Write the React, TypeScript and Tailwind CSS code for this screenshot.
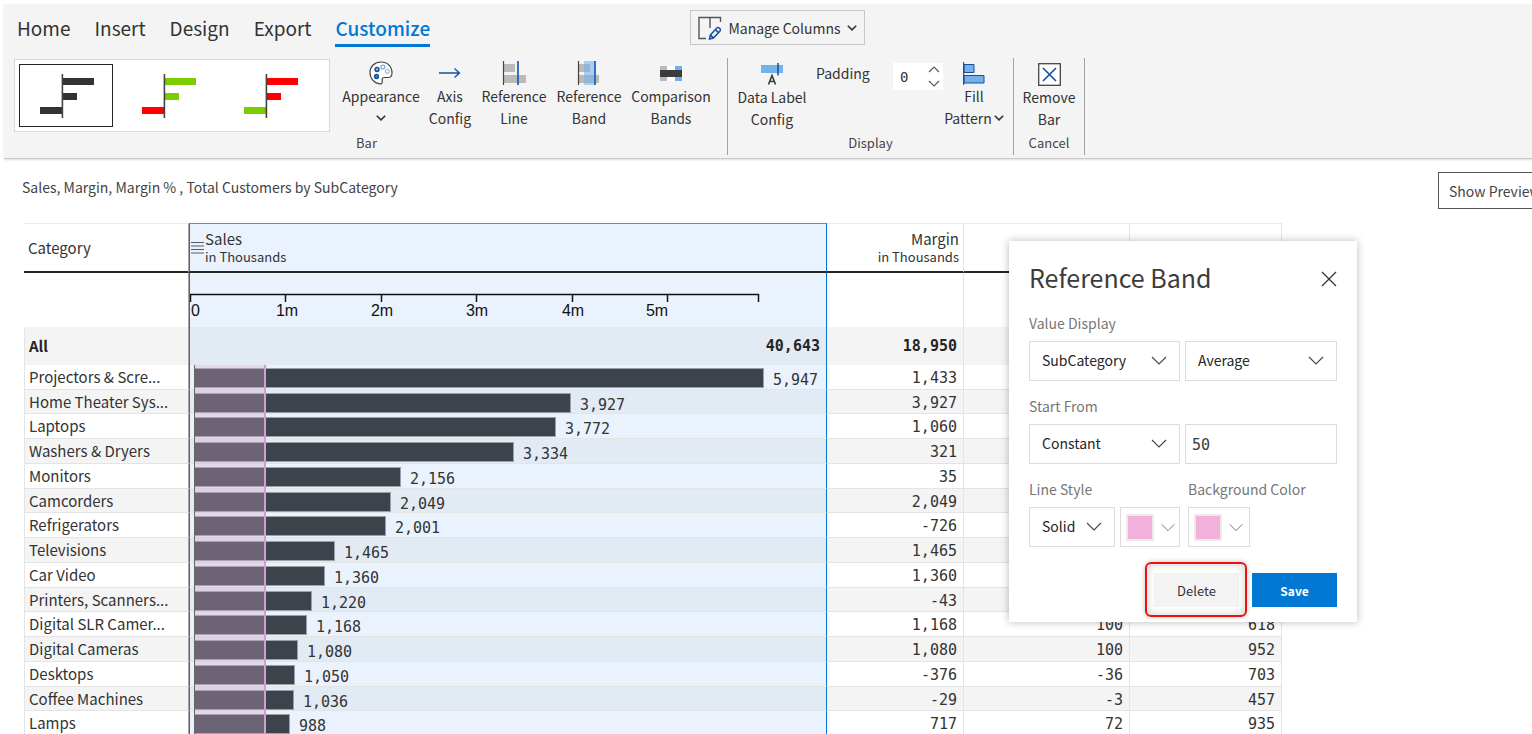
import type { ReactNode } from 'react';

type Row = { name: string; sales: number; margin: string; pct?: string; customers?: string };

const rows: Row[] = [
  { name: 'Projectors & Scre...', sales: 5947, margin: '1,433' },
  { name: 'Home Theater Sys...', sales: 3927, margin: '3,927' },
  { name: 'Laptops', sales: 3772, margin: '1,060' },
  { name: 'Washers & Dryers', sales: 3334, margin: '321' },
  { name: 'Monitors', sales: 2156, margin: '35' },
  { name: 'Camcorders', sales: 2049, margin: '2,049' },
  { name: 'Refrigerators', sales: 2001, margin: '-726' },
  { name: 'Televisions', sales: 1465, margin: '1,465' },
  { name: 'Car Video', sales: 1360, margin: '1,360' },
  { name: 'Printers, Scanners...', sales: 1220, margin: '-43' },
  { name: 'Digital SLR Camer...', sales: 1168, margin: '1,168', pct: '100', customers: '618' },
  { name: 'Digital Cameras', sales: 1080, margin: '1,080', pct: '100', customers: '952' },
  { name: 'Desktops', sales: 1050, margin: '-376', pct: '-36', customers: '703' },
  { name: 'Coffee Machines', sales: 1036, margin: '-29', pct: '-3', customers: '457' },
  { name: 'Lamps', sales: 988, margin: '717', pct: '72', customers: '935' },
];

const MAX_SALES = 5947;
const MAX_BAR = 569;

function Chevron({ className = '' }: { className?: string }) {
  return (
    <svg aria-hidden="true" viewBox="0 0 16 9" className={`pointer-events-none h-[9px] w-4 ${className}`}>
      <path d="M1 1l7 7 7-7" fill="none" stroke="currentColor" strokeWidth="1.1" />
    </svg>
  );
}

function SmallChevron() {
  return (
    <svg aria-hidden="true" viewBox="0 0 10 6" className="h-[6px] w-[10px] shrink-0">
      <path d="M.8.8L5 4.9 9.2.8" fill="none" stroke="#333" strokeWidth="1.6" />
    </svg>
  );
}

function Preset({ top, bottom, active }: { top: string; bottom: string; active?: boolean }) {
  return (
    <button
      aria-label="Bar style"
      className={`flex h-[63px] w-[94px] items-center justify-center border ${active ? 'border-[#252525]' : 'border-transparent'}`}
    >
      <svg viewBox="0 0 54 44" className="ml-px h-11 w-[54px]">
        <rect x="23" y="4" width="31" height="7" fill={top} />
        <rect x="23" y="19" width="14" height="7" fill={top} />
        <rect x="0" y="33" width="22" height="7" fill={bottom} />
        <rect x="21.6" y="0" width="1.6" height="44" fill="#444" />
      </svg>
    </button>
  );
}

function Tool({ icon, children, className = '' }: { icon: ReactNode; children: ReactNode; className?: string }) {
  return (
    <button className={`flex shrink-0 flex-col items-center whitespace-nowrap text-center text-sm leading-[22px] ${className}`}>
      <span className="flex h-6 items-center">{icon}</span>
      <span className="flex flex-col items-center">{children}</span>
    </button>
  );
}

function Group({ label, children, className = '' }: { label: string; children: ReactNode; className?: string }) {
  return (
    <section className={`flex h-[97px] flex-col border-r border-[#a3a3a3] ${className}`}>
      <div className="flex flex-1 items-start">{children}</div>
      <h2 className="pb-0.5 text-center text-[13px] leading-5 text-[#444]">{label}</h2>
    </section>
  );
}

const refAxis = <path d="M1.5 0v24" stroke="#444" strokeWidth="1.2" />;

function Ribbon() {
  return (
    <header className="ml-1 h-[155px] overflow-hidden border-b border-[#c8c8c8] bg-[#f4f4f4] text-[#333] shadow-[0_1px_2px_#ddd]">
      <div className="flex h-[54px] items-start pl-3 pt-1.5">
        <nav className="flex w-[408px] shrink-0 gap-6 pl-px pt-0.5 text-[19px] leading-8">
          <a href="#home">Home</a>
          <a href="#insert">Insert</a>
          <a href="#design">Design</a>
          <a href="#export">Export</a>
          <a href="#customize" aria-current="page" className="h-[35px] border-b-[3px] border-[#0078d4] font-medium text-[#0078d4]">
            Customize
          </a>
        </nav>
        <button className="ml-[266px] flex h-[35px] w-[175px] items-center justify-center gap-1.5 border border-[#c8c8c8] text-sm">
          <svg aria-hidden="true" viewBox="0 0 24 24" className="h-6 w-6">
            <path d="M22.500 6V1.500H1V22.500H8M12 1.500V12" fill="none" stroke="#555" strokeWidth="1.4" />
            <path d="M11.500 23l.8-4 6.500-6.900c1.500-1.600 4.600 1 3.200 2.800L15.400 22l-3.900 1zM17.500 13.700l2.700 2.700M12.500 19l2.600 2.600" fill="none" stroke="#1450a0" strokeWidth="1.5" />
          </svg>
          <span>Manage Columns</span>
          <SmallChevron />
        </button>
      </div>

      <div className="flex pl-2.5">
        <Group label="Bar" className="w-[714px] pr-2">
          <div className="mr-3 mt-px flex h-[73px] w-[316px] gap-2 border border-[#dadada] bg-white p-1">
            <Preset top="#333" bottom="#333" active />
            <Preset top="#7ccc00" bottom="#ff0000" />
            <Preset top="#ff0000" bottom="#7ccc00" />
          </div>
          <div className="flex gap-2 pt-[3px]">
            <Tool
              className="w-[78px]"
              icon={
                <svg viewBox="0 0 24 24" className="h-6 w-6">
                  <path d="M12 1C5.500 1 1 5.500 1 11.500 1 17.600 5.600 22.500 11 22.800c1.500.1 2.200-.5 2.200-1.800v-2.500c0-1.400.8-2 2-2H19c2.500 0 4-1.800 4-4.500C23 5.500 18.500 1 12 1z" fill="#fff" stroke="#444" strokeWidth="1.2" />
                  <circle cx="8" cy="8.500" r="1.900" fill="#8fc3f0" stroke="#1450a0" strokeWidth="1.500" />
                  <circle cx="7.500" cy="15.500" r="1.900" fill="#4a86cc" stroke="#1450a0" strokeWidth="1.500" />
                  <circle cx="13.800" cy="6" r="1.900" fill="#fff" stroke="#78b0e6" strokeWidth="1.300" />
                  <circle cx="18.300" cy="10.300" r="1.900" fill="#fff" stroke="#bbb" strokeWidth="1.300" />
                </svg>
              }
            >
              <span>Appearance</span>
              <span className="flex h-[22px] items-center"><SmallChevron /></span>
            </Tool>
            <Tool
              className="w-11"
              icon={
                <svg viewBox="0 0 22 12" className="h-3 w-[22px]">
                  <path d="M0 6h20M15.500 1.500L20.500 6l-5 4.500" fill="none" stroke="#1450a0" strokeWidth="1.300" />
                </svg>
              }
            >
              <span>Axis</span>
              <span>Config</span>
            </Tool>
            <Tool
              className="w-[68px]"
              icon={
                <svg viewBox="0 0 24 24" className="h-6 w-6">
                  <rect x="2" y="3" width="11" height="8" fill="#bbbab6" />
                  <rect x="2" y="14" width="22" height="8" fill="#bbbab6" />
                  {refAxis}
                  <path d="M16 0v24" stroke="#2464b4" strokeWidth="1.800" />
                </svg>
              }
            >
              <span>Reference</span>
              <span>Line</span>
            </Tool>
            <Tool
              className="w-[66px]"
              icon={
                <svg viewBox="0 0 24 24" className="h-6 w-6">
                  <rect x="2" y="3" width="11" height="8" fill="#bbbab6" />
                  <rect x="2" y="14" width="20" height="8" fill="#bbbab6" />
                  {refAxis}
                  <rect x="7" y="0" width="11" height="24" fill="#78b4eb" opacity=".6" />
                  <path d="M18 0v24" stroke="#2464b4" strokeWidth="1.800" />
                </svg>
              }
            >
              <span>Reference</span>
              <span>Band</span>
            </Tool>
            <Tool
              className="w-[82px]"
              icon={
                <svg viewBox="0 0 22 15" className="h-[15px] w-[22px]">
                  <rect width="7" height="15" fill="#bbbab6" />
                  <rect x="7" width="8" height="15" fill="#fff" />
                  <rect x="15" width="7" height="15" fill="#6fb0ea" />
                  <rect y="4" width="22" height="7" fill="#3c3c3c" />
                </svg>
              }
            >
              <span>Comparison</span>
              <span>Bands</span>
            </Tool>
          </div>
        </Group>

        <Group label="Display" className="w-[286px] pl-2 pr-2">
          <Tool
            className="w-[72px] pt-1"
            icon={
              <svg viewBox="0 0 22 22" className="h-[22px] w-[22px]">
                <rect y="2" width="22" height="8" fill="#74b2eb" />
                <path d="M17 0v12.500" stroke="#1450a0" strokeWidth="1.500" />
                <path d="M7.500 21.500L11 12.500l3.500 9M8.700 18.500h4.600" fill="none" stroke="#3c3c3c" strokeWidth="1.600" />
              </svg>
            }
          >
            <span>Data Label</span>
            <span>Config</span>
          </Tool>
          <div className="flex shrink-0 pl-2 pt-[5px] text-sm">
            <label htmlFor="padding" className="w-[77px] leading-5">Padding</label>
            <div className="flex h-[27px] w-[50px] items-center bg-white">
              <input id="padding" defaultValue="0" className="w-[35px] bg-transparent pl-[7px] font-['DejaVu_Sans_Mono',monospace] text-sm outline-none" />
              <div className="flex flex-col gap-[7px]">
                <button aria-label="Increase padding">
                  <svg viewBox="0 0 12 7" className="block h-[7px] w-3"><path d="M1 6l5-5 5 5" fill="none" stroke="#555" strokeWidth="1.100" /></svg>
                </button>
                <button aria-label="Decrease padding">
                  <svg viewBox="0 0 12 7" className="block h-[7px] w-3"><path d="M1 1l5 5 5-5" fill="none" stroke="#555" strokeWidth="1.100" /></svg>
                </button>
              </div>
            </div>
          </div>
          <Tool
            className="w-[62px] pt-[3px]"
            icon={
              <svg viewBox="0 0 22 23" className="h-[23px] w-[22px]">
                <path d="M1 2.500h10v8H1zM1 13.500h20v7.500H1z" fill="#74b2eb" stroke="#1450a0" />
                <path d="M.7 0v23" stroke="#333" />
              </svg>
            }
          >
            <span>Fill</span>
            <span className="flex items-center gap-0.5">Pattern <SmallChevron /></span>
          </Tool>
        </Group>

        <Group label="Cancel" className="w-[71px]">
          <Tool
            className="w-full pt-1"
            icon={
              <svg viewBox="0 0 23 23" className="h-[23px] w-[23px]">
                <rect x=".7" y=".7" width="21.600" height="21.600" fill="#fff" stroke="#444" strokeWidth="1.300" />
                <path d="M5 5l13 13M18 5L5 18" stroke="#1450a0" strokeWidth="1.600" />
              </svg>
            }
          >
            <span>Remove</span>
            <span>Bar</span>
          </Tool>
        </Group>
      </div>
    </header>
  );
}

function Axis() {
  const ticks = [1, 96, 192, 287, 383, 478, 569];
  return (
    <svg role="img" aria-label="Sales axis" className="block h-[54px] w-full font-['Liberation_Sans',sans-serif] text-base" fill="#111">
      <path d="M0 21.500H569" stroke="#111" strokeWidth="1.500" />
      {ticks.map((x) => (
        <path key={x} d={`M${x - 0.5} 21v8`} stroke="#111" strokeWidth="1.500" />
      ))}
      <text x="1" y="43">0</text>
      <g textAnchor="middle">
        <text x="97" y="43">1m</text>
        <text x="192" y="43">2m</text>
        <text x="287" y="43">3m</text>
        <text x="383" y="43">4m</text>
        <text x="467" y="43">5m</text>
      </g>
    </svg>
  );
}

const cell = 'border-r border-[#e4e4e4] p-0 pt-0.5 pr-1.5 text-right';
const headCell = 'border-t border-r border-b-2 border-t-[#ececec] border-r-[#e4e4e4] border-b-[#252525] p-0 pr-1 text-right font-normal';
const nameCol = 'border-r border-r-[#a8a8a8] p-0 pl-1 text-left';
const salesCol = 'border-l border-r border-l-[#0078d4] border-r-[#0078d4] p-0';

function SalesTable() {
  return (
    <table className="ml-6 w-[1258px] table-fixed border-separate border-spacing-0 font-['DejaVu_Sans_Mono',monospace] text-[15px] leading-5 text-[#333]">
      <colgroup>
        <col className="w-[165px]" />
        <col className="w-[638px]" />
        <col className="w-[137px]" />
        <col className="w-[166px]" />
        <col className="w-[152px]" />
      </colgroup>
      <thead className="font-['Noto_Sans_CJK_SC',sans-serif]">
        <tr className="h-[50px]">
          <th className={`${nameCol} border-b-2 border-t border-b-[#252525] border-t-[#ececec] font-normal`}>Category</th>
          <th className={`${salesCol} border-b-2 border-t border-b-[#252525] border-t-[#3d98e0] bg-[#eaf3fd] text-left font-normal`}>
            <div className="flex items-center gap-px pl-px">
              <svg aria-hidden="true" viewBox="0 0 13 13" className="h-[13px] w-[13px]">
                <path d="M0 1.500h13M0 5h13M0 8.500h13M0 12h13" stroke="#555e68" strokeWidth="1" />
              </svg>
              <div className="leading-[18px]">
                Sales
                <div className="text-[13px]">in Thousands</div>
              </div>
            </div>
          </th>
          <th className={`${headCell} leading-[18px]`}>
            Margin
            <div className="text-[13px]">in Thousands</div>
          </th>
          <th className={headCell}>Margin %</th>
          <th className={headCell}>Total Customers</th>
        </tr>
      </thead>
      <tbody>
        <tr className="h-[54px]">
          <td className={nameCol} />
          <td className={`${salesCol} bg-[#eaf3fd]`}><Axis /></td>
          <td className={cell} />
          <td className={cell} />
          <td className={cell} />
        </tr>
        <tr className="h-[38px] bg-[#f4f4f4] font-bold text-[#252525]">
          <th className={`${nameCol} border-l border-l-[#e4e4e4] font-['Noto_Sans_CJK_SC',sans-serif]`}>All</th>
          <td className={`${salesCol} bg-[#e2eaf4] pr-1.5 text-right`}>40,643</td>
          <td className="border-r border-[#e4e4e4] p-0 pr-1.5 text-right">18,950</td>
          <td className={cell} />
          <td className={cell} />
        </tr>
        {rows.map((r) => (
          <tr key={r.name} className="group h-[25px] even:bg-[#f4f4f4] [&:nth-child(4n)]:h-6 [&>*]:border-b [&>*]:border-b-[#e4e4e4]">
            <th className={`${nameCol} truncate border-l border-l-[#e4e4e4] font-['Noto_Sans_CJK_SC',sans-serif] font-normal leading-5`}>{r.name}</th>
            <td className={`${salesCol} relative bg-[#eaf3fd] group-even:bg-[#e2eaf4]`}>
              <div className="flex items-center pl-1 pt-0.5">
                <div className="h-5 border border-[#99a0a8] bg-[#3c434b]" style={{ width: Math.round((r.sales * MAX_BAR) / MAX_SALES) + 1 }} />
                <span className="pl-[9px] pt-1 leading-4">{r.sales.toLocaleString('en-US')}</span>
              </div>
              <div className="absolute -bottom-px left-1 top-0 w-[72px] border-l border-r-2 border-l-[#666] border-r-[#d29fca] bg-[rgba(205,165,200,0.33)]" />
            </td>
            <td className={cell}>{r.margin}</td>
            <td className={cell}>{r.pct}</td>
            <td className={cell}>{r.customers}</td>
          </tr>
        ))}
      </tbody>
    </table>
  );
}

function Select({ label, options, className = '' }: { label: string; options: string[]; className?: string }) {
  return (
    <div className={`relative h-10 ${className}`}>
      <select aria-label={label} className="h-full w-full appearance-none border border-[#dcdcdc] bg-white pb-0.5 pl-3 text-sm text-[#252525] outline-none">
        {options.map((o) => (
          <option key={o}>{o}</option>
        ))}
      </select>
      <Chevron className="absolute right-[13px] top-[15px] text-[#444]" />
    </div>
  );
}

function ColorPicker({ label, className = '' }: { label: string; className?: string }) {
  return (
    <button aria-label={label} className={`flex h-10 items-center gap-1.5 border border-[#dcdcdc] bg-white pl-[5px] text-[#777] ${className}`}>
      <span className="h-[27px] w-7 border-2 border-[#ebebeb] bg-[#f1b1da]" />
      <Chevron className="scale-90" />
    </button>
  );
}

const legendStyle = 'py-2 text-sm leading-5 text-[#777]';

function ReferenceBandPanel() {
  return (
    <aside role="dialog" aria-labelledby="band-title" className="absolute left-[1009px] top-[241px] h-[381px] w-[348px] bg-white px-5 shadow-[0_0_8px_rgba(0,0,0,0.28)]">
      <div className="flex items-center justify-between pb-2 pt-5">
        <h1 id="band-title" className="pb-1 text-[25px] leading-8 text-[#3c3c3c]">Reference Band</h1>
        <button aria-label="Close">
          <svg viewBox="0 0 16 16" className="h-4 w-4"><path d="M1 1l14 14M15 1L1 15" stroke="#333" strokeWidth="1.300" /></svg>
        </button>
      </div>
      <fieldset>
        <legend className={legendStyle}>Value Display</legend>
        <div className="grid grid-cols-[151px_1fr] gap-[5px]">
          <Select label="Value field" options={['SubCategory', 'Category']} />
          <Select label="Aggregation" options={['Average', 'Minimum', 'Maximum']} />
        </div>
      </fieldset>
      <fieldset className="mt-[7px]">
        <legend className={legendStyle}>Start From</legend>
        <div className="grid grid-cols-[151px_1fr] gap-[5px]">
          <Select label="Start type" options={['Constant', 'Measure']} />
          <input aria-label="Start value" defaultValue="50" className="h-10 w-full border border-[#dcdcdc] pl-1.5 pt-0.5 font-['DejaVu_Sans_Mono',monospace] text-[15px] text-[#3c3c3c] outline-none" />
        </div>
      </fieldset>
      <div className="mt-[7px] flex gap-2">
        <fieldset className="w-[151px] shrink-0">
          <legend className={legendStyle}>Line Style</legend>
          <div className="flex gap-[5px]">
            <Select label="Line style" options={['Solid', 'Dash']} className="w-[86px]" />
            <ColorPicker label="Line color" className="w-[60px]" />
          </div>
        </fieldset>
        <fieldset>
          <legend className={legendStyle}>Background Color</legend>
          <ColorPicker label="Background color" className="w-[62px]" />
        </fieldset>
      </div>
      <div className="mt-[26px] flex justify-end gap-[13px]">
        <div className="relative">
          <button className="h-[34px] w-[85px] bg-[#f3f3f3] pt-0.5 text-[13px] text-[#333]">Delete</button>
          <span className="pointer-events-none absolute -bottom-[10px] -left-[9px] -right-2 -top-[11px] rounded-md border-2 border-[#f01010] shadow-[inset_0_0_8px_rgba(0,0,0,0.2),0_0_5px_rgba(0,0,0,0.25)]" />
        </div>
        <button className="h-[34px] w-[85px] bg-[#0078d4] pt-0.5 text-xs font-bold text-white">Save</button>
      </div>
    </aside>
  );
}

export default function App() {
  return (
    <div className="relative h-screen overflow-hidden bg-white pt-1 font-['Noto_Sans_CJK_SC',sans-serif]">
      <Ribbon />
      <main>
        <div className="flex h-16 items-start justify-between pl-[22px] pt-[13px]">
          <h2 className="pt-[5px] text-sm leading-5 text-[#444]">Sales, Margin, Margin % , Total Customers by SubCategory</h2>
          <button className="-mr-3 h-[37px] w-[106px] shrink-0 whitespace-nowrap border border-[#555] bg-white pl-2.5 text-left text-sm text-[#444]">
            Show Preview
          </button>
        </div>
        <SalesTable />
      </main>
      <ReferenceBandPanel />
    </div>
  );
}
